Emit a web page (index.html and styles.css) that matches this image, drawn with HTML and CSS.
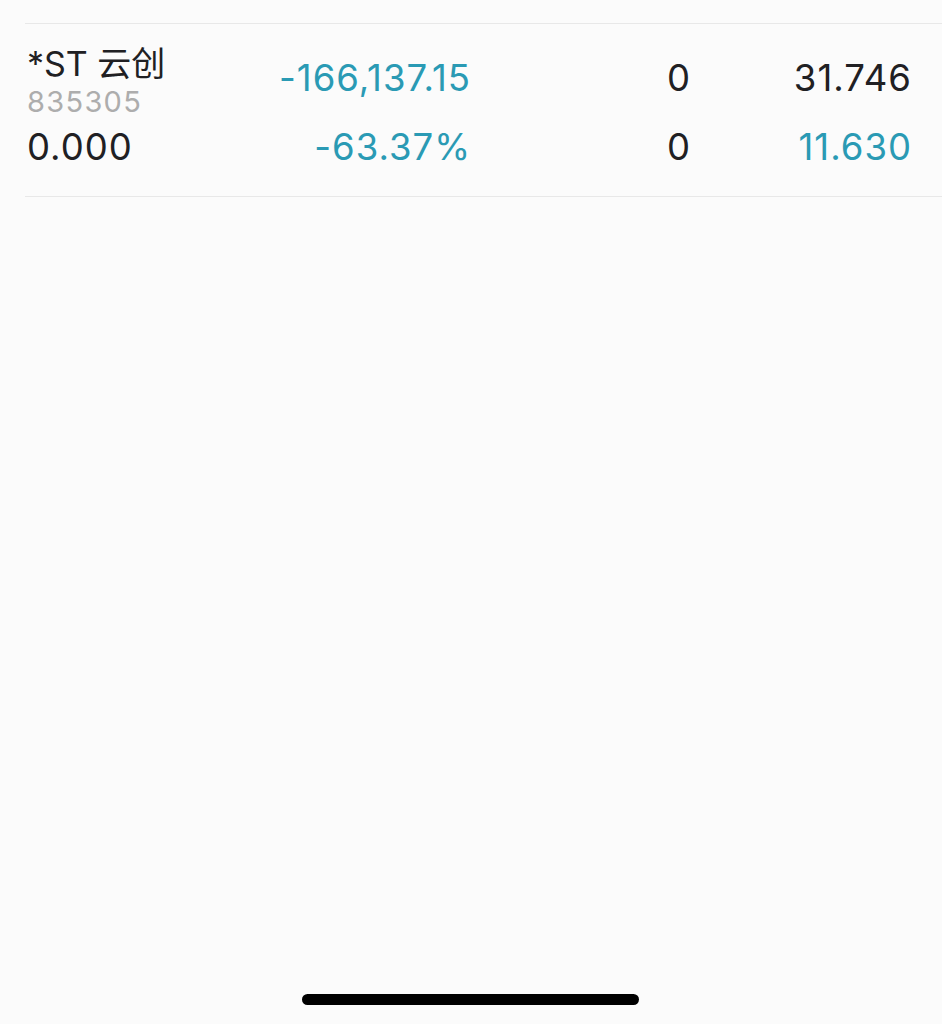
FILE: index.html
```html
<!DOCTYPE html>
<html lang="zh-CN">
<head>
    <meta charset="UTF-8">
    <meta name="viewport" content="width=device-width, initial-scale=1.0">
    <title>持仓</title>
    <link rel="stylesheet" href="styles.css">
</head>
<body>

<div class="list">
    <div class="row">
        <div class="name-cell">
            <div class="name">*ST 云创</div>
            <div class="code">835305</div>
        </div>
        <div class="num up">-166,137.15</div>
        <div class="num">0</div>
        <div class="num">31.746</div>

        <div class="num left">0.000</div>
        <div class="num up">-63.37%</div>
        <div class="num">0</div>
        <div class="num up">11.630</div>
    </div>
</div>

<div class="home-bar"></div>

</body>
</html>
```

FILE: styles.css
```css
body {
    font-family: Inter, "Noto Sans CJK SC", sans-serif;
    background-color: #fbfbfb;
    color: #202023;
    margin: 0;
    padding: 0;
    height: 100vh;
}

.list {
    padding-top: 23px;
}

.row {
    margin-left: 25px;
    padding: 22px 31px 29px 2px;
    border-top: 1px solid #e8e8e8;
    border-bottom: 1px solid #e8e8e8;
    display: grid;
    grid-template-columns: 198px 245px 220px 221px;
    row-gap: 5px;
    align-items: start;
}

.name {
    font-size: 34px;
    line-height: 36px;
}

.code {
    font-size: 29px;
    line-height: 40px;
    letter-spacing: 1.3px;
    color: #adadad;
}

.num {
    font-size: 36.5px;
    line-height: 40px;
    letter-spacing: 1px;
    text-align: right;
    margin-right: -1px;
}

.row > .num:nth-child(-n+4) {
    margin-top: 12px;
}

.num.left {
    text-align: left;
}

.up {
    color: #2a9ab4;
}

/* barra home iOS */
.home-bar {
    position: fixed;
    left: 302px;
    bottom: 19px;
    width: 337px;
    height: 11px;
    border-radius: 6px;
    background-color: #000;
}
```
